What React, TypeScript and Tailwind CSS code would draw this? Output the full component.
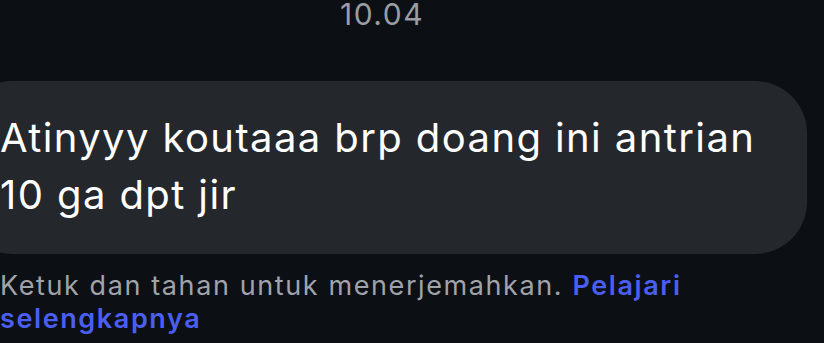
export default function App() {
  return (
    <div className="flex h-[343px] w-[824px] flex-col overflow-hidden bg-[#0c0f14] font-['Inter',sans-serif]">
      {/* Waktu */}
      <div className="-mt-px flex w-[764px] justify-center text-[30px] leading-[30px] tracking-[1.5px] text-[#9a9da3]">
        <span>10.04</span>
      </div>

      {/* Gelembung pesan */}
      <div className="-ml-[40px] mt-[52px] h-[173px] w-[847px] shrink-0 rounded-[52px] bg-[#24272c] pl-[40px] pt-[28px]">
        <p className="whitespace-nowrap text-[40px] leading-[57px] tracking-[1.4px] text-white">
          Atinyyy koutaaa brp doang ini antrian
          <br />
          10 ga dpt jir
        </p>
      </div>

      <p className="mt-[15px] w-[720px] text-[27px] leading-[33px] tracking-[1.6px] text-[#a0a3a9]">
        Ketuk dan tahan untuk menerjemahkan.{' '}
        <span className="font-semibold text-[#4b5ef2]">Pelajari selengkapnya</span>
      </p>
    </div>
  );
}
